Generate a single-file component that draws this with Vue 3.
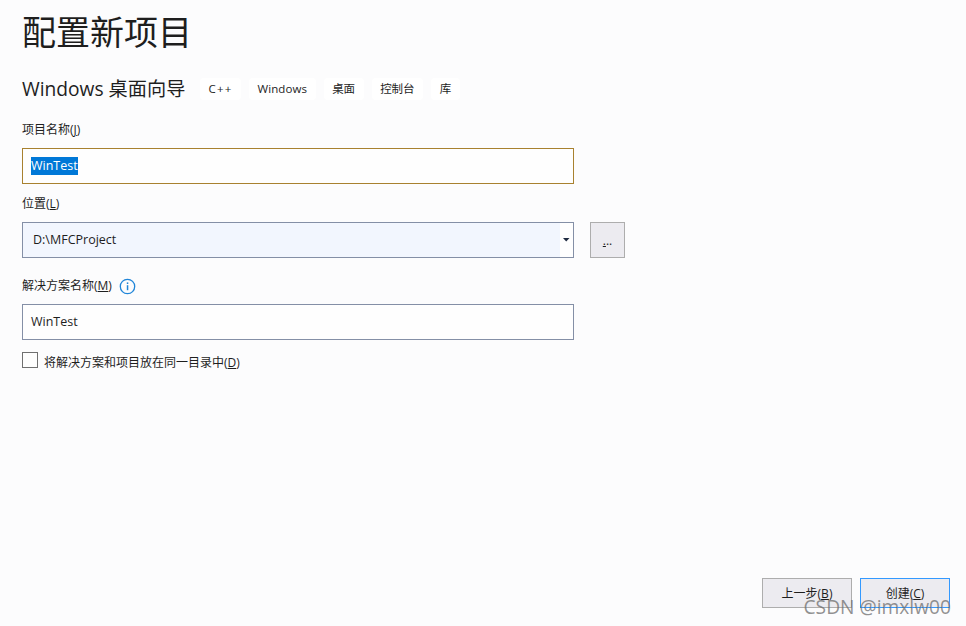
<script setup>
const tags = ['C++', 'Windows', '桌面', '控制台', '库']
</script>

<template>
  <div class="page">
    <h1 class="title">配置新项目</h1>
    <div class="sub">
      <h2>Windows 桌面向导</h2>
      <div class="tags">
        <span v-for="t in tags" :key="t" class="tag">{{ t }}</span>
      </div>
    </div>

    <div class="label first"><span>项目名称(<u>J</u>)</span></div>
    <div class="field focus"><span class="sel">WinTest</span></div>

    <div class="label second"><span>位置(<u>L</u>)</span></div>
    <div class="row">
      <div class="field combo">
        <span class="combo-text">D:\MFCProject</span>
        <span class="arrow-box"><svg width="7" height="4" viewBox="0 0 7 4"><path d="M0 0h6.5L3.2 3.6z" fill="#1e2a40"/></svg></span>
      </div>
      <div class="browse"><span><u>.</u>..</span></div>
    </div>

    <div class="label third">
      <span>解决方案名称(<u>M</u>)</span>
      <svg class="info" width="17" height="17" viewBox="0 0 17 17">
        <circle cx="8.5" cy="8.5" r="7.2" fill="none" stroke="#1f85d8" stroke-width="1.3"/>
        <rect x="7.8" y="7.2" width="1.5" height="5" fill="#1f85d8"/>
        <rect x="7.8" y="4.4" width="1.5" height="1.6" fill="#1f85d8"/>
      </svg>
    </div>
    <div class="field"><span>WinTest</span></div>

    <div class="check">
      <span class="box"></span>
      <span>将解决方案和项目放在同一目录中(<u>D</u>)</span>
    </div>

    <div class="spacer"></div>
    <div class="actions">
      <div class="btn"><span>上一步(<u>B</u>)</span></div>
      <div class="btn primary"><span>创建(<u>C</u>)</span></div>
    </div>
    <div class="mark">CSDN @imxlw00</div>
  </div>
</template>

<style>
html, body { margin: 0; background: #fcfcfd; }
</style>

<style scoped>
.page {
  position: relative;
  box-sizing: border-box;
  width: 966px;
  height: 626px;
  padding: 0 16px 18px 22px;
  display: flex;
  flex-direction: column;
  overflow: hidden;
  background: #fcfcfd;
  color: #1e1e1e;
  font-family: "Open Sans", "Noto Sans CJK SC", sans-serif;
  font-size: 12px;
}
u { text-underline-offset: 1px; }
.title {
  margin: 9px 0 0;
  font-weight: 400;
  font-size: 34px;
  line-height: 46px;
  color: #1e1e1e;
}
.sub {
  display: flex;
  align-items: center;
  margin-top: 23px;
  height: 22px;
}
.sub h2 {
  margin: 0;
  font-weight: 400;
  font-size: 19.2px;
  line-height: 22px;
  white-space: nowrap;
  width: 178px;
}
.tags { display: flex; gap: 8px; }
.tag {
  background: #fff;
  border-radius: 4px;
  padding: 0 8.5px;
  height: 22px;
  line-height: 22px;
  font-size: 11.5px;
}
.tag:first-child { letter-spacing: 1.2px; }
.tag:nth-child(2) { letter-spacing: 0.1px; }
.label {
  display: flex;
  align-items: center;
  height: 18px;
  line-height: 18px;
}
.first { margin-top: 21px; margin-bottom: 9px; }
.second { margin-top: 11px; margin-bottom: 9px; }
.third { margin-top: 19px; margin-bottom: 9px; }
.info { margin-left: 7px; }
.field {
  box-sizing: border-box;
  width: 552px;
  height: 36px;
  flex: none;
  border: 1px solid #848fa6;
  background: #fefefe;
  padding: 0 0 2px 8px;
  display: flex;
  align-items: center;
  font-size: 12.5px;
}
.focus { border-color: #a8812f; padding-bottom: 0; }
.sel { background: #0078d7; color: #fff; line-height: 18px; }
.row { display: flex; gap: 16px; }
.combo { padding: 0; background: #f2f6fe; }
.combo-text { flex: 1; padding: 0 0 2px 10px; }
.arrow-box {
  width: 13px;
  align-self: stretch;
  background: #fefefe;
  display: flex;
  align-items: center;
  justify-content: center;
}
.browse {
  box-sizing: border-box;
  width: 35px;
  height: 36px;
  border: 1px solid #adadad;
  background: #ecebf0;
  display: flex;
  align-items: center;
  justify-content: center;
  font-size: 12px;
}
.check {
  display: flex;
  align-items: center;
  margin-top: 12px;
  height: 20px;
  gap: 6px;
}
.box {
  box-sizing: border-box;
  width: 16px;
  height: 16px;
  border: 1px solid #707070;
  background: #fefefe;
  align-self: flex-start;
}
.spacer { flex: 1; }
.actions { display: flex; justify-content: flex-end; gap: 8px; }
.btn {
  box-sizing: border-box;
  width: 90px;
  height: 30px;
  border: 1px solid #adadad;
  background: #ecebf0;
  display: flex;
  align-items: center;
  justify-content: center;
}
.primary { border-color: #3399ff; }
.mark {
  position: absolute;
  right: 15px;
  top: 594px;
  font-family: "Open Sans", sans-serif;
  font-size: 19.2px;
  line-height: 26px;
  color: rgba(110, 110, 110, 0.75);
  white-space: nowrap;
}
</style>
